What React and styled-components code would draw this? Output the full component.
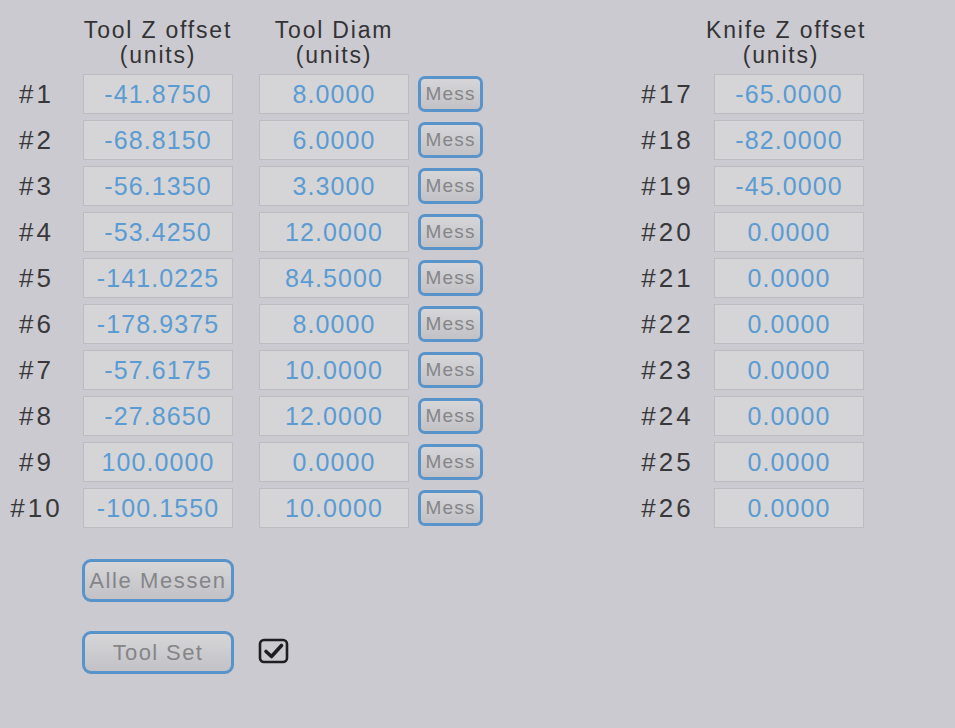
import React from 'react';
import styled, { createGlobalStyle } from 'styled-components';

const GlobalStyle = createGlobalStyle`
  html, body {
    margin: 0;
    padding: 0;
    background: #cbcad0;
  }
  body {
    font-family: "Liberation Sans", Arial, Helvetica, sans-serif;
    width: 955px;
    height: 728px;
    overflow: hidden;
  }
`;

const Page = styled.div`
  display: flex;
  align-items: flex-start;
  gap: 148px;
  padding-top: 18px;
`;

const Section = styled.div`
  display: flex;
  flex-direction: column;
`;

const Row = styled.div`
  display: flex;
  align-items: center;
  height: 40px;
  margin-bottom: 6px;
`;

const HeaderRow = styled.div`
  display: flex;
  align-items: flex-start;
  height: 50px;
  margin-bottom: 6px;
`;

const HeaderCell = styled.div`
  width: ${p => p.width || 150}px;
  margin-left: ${p => p.gap || 0}px;
  text-align: center;
  font-size: 23px;
  line-height: 25px;
  letter-spacing: 1.8px;
  color: #333335;
  white-space: nowrap;
  transform: translateX(${p => p.shift || 0}px);
`;

const Label = styled.div`
  width: 70px;
  text-align: center;
  font-size: 26px;
  letter-spacing: 3px;
  color: #38383a;
  padding-left: 3px;
  box-sizing: border-box;
`;

const Field = styled.div`
  box-sizing: border-box;
  width: 150px;
  height: 40px;
  margin-left: ${p => p.gap}px;
  display: flex;
  align-items: center;
  justify-content: center;
  background: #d5d5d7;
  border: 1.5px solid #bdbdc1;
  color: #5a9bd3;
  font-size: 25px;
  letter-spacing: 1.1px;
  white-space: nowrap;
  overflow: hidden;
`;

const BlueButton = styled.button`
  box-sizing: border-box;
  font-family: "Liberation Sans", Arial, Helvetica, sans-serif;
  border: 3px solid #5893c9;
  border-radius: ${p => (p.small ? 7 : 9)}px;
  background: linear-gradient(to bottom, #d6d6d9, #c2c2c6);
  color: #858588;
  padding: 0;
  white-space: nowrap;
  display: flex;
  align-items: center;
  justify-content: center;
`;

const MessButton = styled(BlueButton)`
  width: 65px;
  height: 36px;
  margin-left: 9px;
  font-size: 19px;
  letter-spacing: 1.2px;
`;

const WideButton = styled(BlueButton)`
  width: 152px;
  height: 43px;
  font-size: 22px;
  letter-spacing: ${p => p.spacing}px;
`;

const Actions = styled.div`
  display: flex;
  flex-direction: column;
  gap: 29px;
  margin-top: 25px;
  margin-left: 82px;
`;

const ActionRow = styled.div`
  display: flex;
  align-items: center;
  gap: 24px;
`;

const CheckBox = styled.svg`
  width: 31px;
  height: 26px;
  display: block;
  margin-top: -3px;
`;

const tools = [
  ['#1', '-41.8750', '8.0000'],
  ['#2', '-68.8150', '6.0000'],
  ['#3', '-56.1350', '3.3000'],
  ['#4', '-53.4250', '12.0000'],
  ['#5', '-141.0225', '84.5000'],
  ['#6', '-178.9375', '8.0000'],
  ['#7', '-57.6175', '10.0000'],
  ['#8', '-27.8650', '12.0000'],
  ['#9', '100.0000', '0.0000'],
  ['#10', '-100.1550', '10.0000'],
];

const knives = [
  ['#17', '-65.0000'],
  ['#18', '-82.0000'],
  ['#19', '-45.0000'],
  ['#20', '0.0000'],
  ['#21', '0.0000'],
  ['#22', '0.0000'],
  ['#23', '0.0000'],
  ['#24', '0.0000'],
  ['#25', '0.0000'],
  ['#26', '0.0000'],
];

export default function App() {
  return (
    <>
      <GlobalStyle />
      <Page>
        <Section>
          <HeaderRow>
            <HeaderCell gap={83}>Tool Z offset<br />(units)</HeaderCell>
            <HeaderCell gap={26}>Tool Diam<br />(units)</HeaderCell>
          </HeaderRow>
          {tools.map(([num, z, d]) => (
            <Row key={num}>
              <Label>{num}</Label>
              <Field gap={13}>{z}</Field>
              <Field gap={26}>{d}</Field>
              <MessButton small>Mess</MessButton>
            </Row>
          ))}
          <Actions>
            <WideButton spacing={1.6}>Alle Messen</WideButton>
            <ActionRow>
              <WideButton spacing={1.4}>Tool Set</WideButton>
              <CheckBox viewBox="0 0 31 26">
                <rect x="2" y="2" width="27" height="22" rx="4" fill="none" stroke="#1f1f21" strokeWidth="2.6" />
                <path d="M8 13.5 L13.5 18.5 L23.5 7.5" fill="none" stroke="#1f1f21" strokeWidth="3.6" strokeLinecap="round" strokeLinejoin="round" />
              </CheckBox>
            </ActionRow>
          </Actions>
        </Section>
        <Section>
          <HeaderRow>
            <HeaderCell gap={83} width={150} shift={-8}>Knife Z offset<br />(units)</HeaderCell>
          </HeaderRow>
          {knives.map(([num, z]) => (
            <Row key={num}>
              <Label>{num}</Label>
              <Field gap={13}>{z}</Field>
            </Row>
          ))}
        </Section>
      </Page>
    </>
  );
}
